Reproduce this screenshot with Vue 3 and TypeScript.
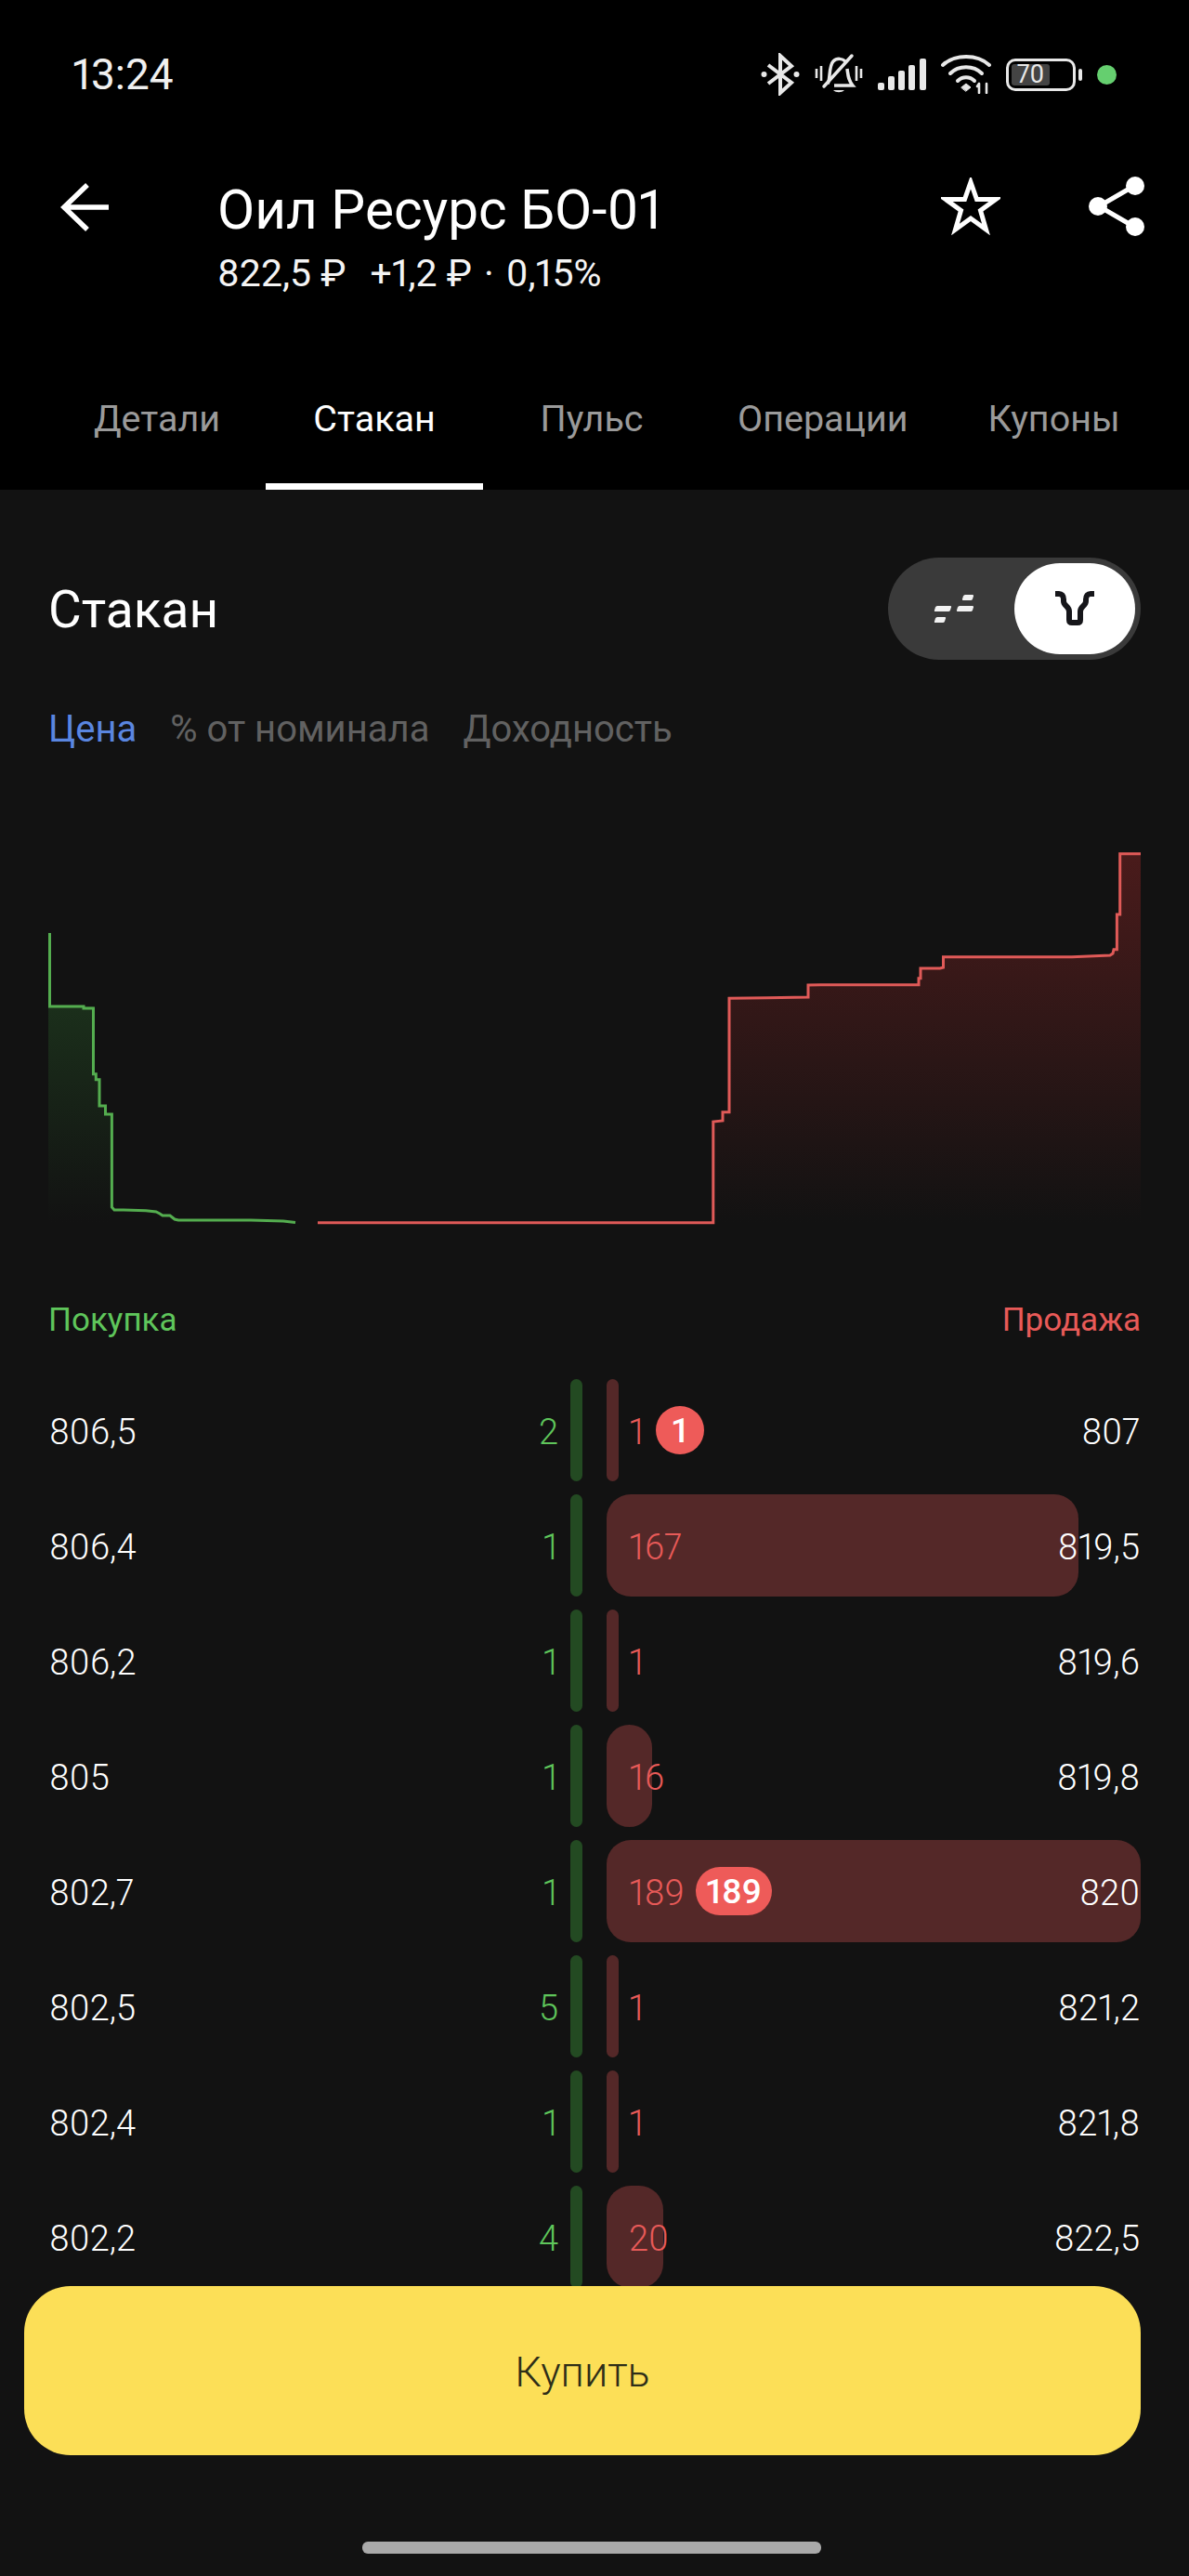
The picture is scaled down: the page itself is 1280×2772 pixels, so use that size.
<script setup lang="ts">
// Стакан заявок: шапка, график глубины и таблица покупка/продажа
interface Row {
  bid: string
  bidQty: number
  askQty: number
  ask: string
  width: number
  badge?: string
}

const tabs = ['Детали', 'Стакан', 'Пульс', 'Операции', 'Купоны']

const rows: Row[] = [
  { bid: '806,5', bidQty: 2, askQty: 1, ask: '807', width: 13, badge: '1' },
  { bid: '806,4', bidQty: 1, askQty: 167, ask: '819,5', width: 508 },
  { bid: '806,2', bidQty: 1, askQty: 1, ask: '819,6', width: 13 },
  { bid: '805', bidQty: 1, askQty: 16, ask: '819,8', width: 49 },
  { bid: '802,7', bidQty: 1, askQty: 189, ask: '820', width: 575, badge: '189' },
  { bid: '802,5', bidQty: 5, askQty: 1, ask: '821,2', width: 13 },
  { bid: '802,4', bidQty: 1, askQty: 1, ask: '821,8', width: 13 },
  { bid: '802,2', bidQty: 4, askQty: 20, ask: '822,5', width: 61 },
]

const greenLine =
  'M53.5 1004V1083H90V1085H100.5V1155.7H103.3V1161.7H107V1190H113.5V1199H120.4V1299L123 1302H133L157 1302.7L168 1304L172 1306L175 1308H183L188 1312L192 1313H270L305 1314L318 1315.5'
const greenFill = 'M52 1083H100.5V1155.7H103.3V1161.7H107V1190H113.5V1199H120.4V1316H52Z'
const redLine =
  'M342 1315.7H767.8V1207L778 1206V1196.7H785V1074.3L825.7 1073.7L870 1073V1060L883.7 1059.7H989V1052.7H991V1042H1012L1015.5 1041V1029.7H1154L1195 1028L1198 1026L1199 1021.7H1202.4V984H1205.7V918.7H1228'
const redFill =
  'M767.8 1316V1207L778 1206V1196.7H785V1074.3L825.7 1073.7L870 1073V1060L883.7 1059.7H989V1052.7H991V1042H1012L1015.5 1041V1029.7H1154L1195 1028L1198 1026L1199 1021.7H1202.4V984H1205.7V918.7H1228V1316Z'
</script>

<template>
  <div class="screen">
    <header class="top">
      <div class="status">
        <span class="time">13:24</span>
        <div class="status-icons">
          <svg width="42" height="46" viewBox="0 0 42 46" fill="none" stroke="#e8e8e8" stroke-width="4">
            <path d="M8 13L33 32L21 43V3L33 14L8 33" />
            <circle cx="3.500" cy="23" r="3" fill="#e8e8e8" stroke="none" />
            <circle cx="38.500" cy="23" r="3" fill="#e8e8e8" stroke="none" />
          </svg>
          <svg width="52" height="46" viewBox="0 0 52 46" fill="none" stroke="#e8e8e8" stroke-width="3.5">
            <path d="M2 17V27M7 14V30M45 14V30M50 17V27" stroke-width="2.600" />
            <path d="M14 33C17 29 15 14 20 9C24 5 30 6 33 9M35 17C36 24 36 29 41 35H21" />
            <path d="M40 3L10 36" stroke-linecap="round" />
            <path d="M20 40C23 43 29 43 32 40Z" fill="#e8e8e8" stroke="none" />
          </svg>
          <svg width="52" height="34" viewBox="0 0 52 34" fill="#e8e8e8">
            <rect x="0" y="26" width="7" height="8" rx="2" />
            <rect x="11" y="19" width="7" height="15" rx="2" />
            <rect x="22" y="13" width="7" height="21" rx="2" />
            <rect x="33" y="7" width="7" height="27" rx="2" />
            <rect x="45" y="0" width="7" height="34" rx="2" />
          </svg>
          <svg width="54" height="42" viewBox="0 0 54 42" fill="none" stroke="#e8e8e8" stroke-width="4" stroke-linecap="round">
            <path d="M2 11C15 -1 39 -1 52 11" />
            <path d="M10 20C19 11 35 11 44 20" />
            <path d="M18 28C23 23 31 23 36 28" />
            <path d="M22 35L27 31L32 35L27 39Z" fill="#e8e8e8" stroke-width="1" />
            <path d="M41 41V31M39 34L41 31M49 41V31" stroke-width="2.600" />
          </svg>
          <div class="battery">
            <div class="battery-body"><span class="battery-level">70</span></div>
            <div class="battery-cap"></div>
          </div>
          <span class="green-dot"></span>
        </div>
      </div>

      <div class="title-bar">
        <svg class="back" width="52" height="52" viewBox="0 0 52 52" fill="none" stroke="#fff" stroke-width="5.500">
          <path d="M29 2L4 26L29 50M4 26H52" />
        </svg>
        <div class="title-text">
          <h1>Оил Ресурс БО-01</h1>
          <p><span>822,5 ₽</span><span class="change">+1,2 ₽</span><span class="sep">·</span><span>0,15%</span></p>
        </div>
        <svg class="star" width="64" height="62" viewBox="0 0 64 62" fill="none" stroke="#fff" stroke-width="5">
          <path d="M32 5L38.500 23.500H59L42.500 35.500L48.500 56L32 44L15.500 56L21.500 35.500L5 23.500H25.500Z" />
        </svg>
        <svg class="share" width="60" height="66" viewBox="0 0 60 66" fill="#fff" stroke="#fff">
          <path d="M49 11L11 33L49 55" fill="none" stroke-width="5" />
          <circle cx="50" cy="11" r="10" stroke="none" />
          <circle cx="10" cy="33" r="10" stroke="none" />
          <circle cx="50" cy="55" r="10" stroke="none" />
        </svg>
      </div>

      <nav class="tabs">
        <div v-for="tab in tabs" :key="tab" class="tab" :class="{ active: tab === 'Стакан' }">{{ tab }}</div>
      </nav>
    </header>

    <main class="content">
      <div class="book-head">
        <h2>Стакан</h2>
        <div class="switch">
          <svg width="46" height="34" viewBox="0 0 46 34" fill="#f2f2f2">
            <path d="M5 14H19Q20.500 14 20 15.500L19 18.500Q18.500 20 17 20H3Q1.500 20 2 18.500L3 15.500Q3.500 14 5 14Z" />
            <path d="M5 26H13Q14.500 26 14 27.500L13 30.500Q12.500 32 11 32H3Q1.500 32 2 30.500L3 27.500Q3.500 26 5 26Z" />
            <path d="M35 2H43Q44.500 2 44 3.500L43 6.500Q42.500 8 41 8H33Q31.500 8 32 6.500L33 3.500Q33.500 2 35 2Z" />
            <path d="M29 14H43Q44.500 14 44 15.500L43 18.500Q42.500 20 41 20H27Q25.500 20 26 18.500L27 15.500Q27.500 14 29 14Z" />
          </svg>
          <div class="switch-on">
            <svg width="44" height="38" viewBox="0 0 44 38" fill="none" stroke="#16161a" stroke-width="6">
              <path d="M1 3H5C8 3 10 5 10 9V11C10 16 16 16 16 22V31Q16 34 19 34H25Q28 34 28 31V22C28 16 34 16 34 11V9C34 5 36 3 39 3H43" />
            </svg>
          </div>
        </div>
      </div>

      <div class="modes">
        <span class="mode active">Цена</span>
        <span class="mode">% от номинала</span>
        <span class="mode">Доходность</span>
      </div>

      <svg class="chart" width="1280" height="440" viewBox="0 900 1280 440" fill="none">
        <defs>
          <linearGradient id="red-fade" x1="0" y1="919" x2="0" y2="1316" gradientUnits="userSpaceOnUse">
            <stop offset="0" stop-color="#4a1b1b" />
            <stop offset="1" stop-color="#4a1b1b" stop-opacity="0" />
          </linearGradient>
          <linearGradient id="green-fade" x1="0" y1="1083" x2="0" y2="1316" gradientUnits="userSpaceOnUse">
            <stop offset="0" stop-color="#1b2f1b" />
            <stop offset="1" stop-color="#1b2f1b" stop-opacity="0" />
          </linearGradient>
        </defs>
        <path :d="greenFill" fill="url(#green-fade)" />
        <path :d="redFill" fill="url(#red-fade)" />
        <path :d="greenLine" stroke="#54ad4f" stroke-width="3" />
        <path :d="redLine" stroke="#e05a58" stroke-width="3" />
      </svg>

      <div class="sides">
        <span class="buy">Покупка</span>
        <span class="sell">Продажа</span>
      </div>

      <div class="book">
        <div v-for="row in rows" :key="row.bid" class="row">
          <span class="bid">{{ row.bid }}</span>
          <span class="bid-qty">{{ row.bidQty }}</span>
          <span class="bid-bar"></span>
          <div class="ask-cell">
            <span class="ask-bar" :style="{ width: row.width + 'px' }"></span>
            <span class="ask-qty">{{ row.askQty }}</span>
            <span v-if="row.badge" class="badge">{{ row.badge }}</span>
            <span class="ask">{{ row.ask }}</span>
          </div>
        </div>
      </div>
    </main>

    <footer class="bottom">
      <button class="buy-btn">Купить</button>
      <div class="home-bar"></div>
    </footer>
  </div>
</template>

<style>
html,
body {
  margin: 0;
  background: #121212;
}
</style>

<style scoped>
.screen {
  width: 1280px;
  height: 2772px;
  overflow: hidden;
  background: #121212;
  color: #fff;
  font-family: Roboto, "Noto Sans", sans-serif;
  font-variant-numeric: proportional-nums;
}
.top {
  height: 527px;
  background: #000;
}
.status {
  height: 160px;
  display: flex;
  align-items: center;
  justify-content: space-between;
  padding: 0 78px 0 78px;
}
.time {
  font-size: 46px;
  color: #f0f0f0;
}
.status-icons {
  display: flex;
  align-items: center;
  gap: 16px;
}
.battery {
  display: flex;
  align-items: center;
  gap: 3px;
}
.battery-body {
  width: 75px;
  height: 35px;
  box-sizing: border-box;
  border: 3px solid #e8e8e8;
  border-radius: 10px;
  padding: 3px;
}
.battery-level {
  display: block;
  width: 41px;
  height: 100%;
  background: #444;
  border-radius: 3px;
  color: #e8e8e8;
  font-size: 27px;
  line-height: 23px;
  text-align: center;
}
.battery-cap {
  width: 4px;
  height: 13px;
  background: #e8e8e8;
  border-radius: 2px;
}
.green-dot {
  width: 21px;
  height: 21px;
  border-radius: 50%;
  background: #65cf6f;
}
.title-bar {
  height: 150px;
  display: flex;
  align-items: flex-start;
  padding: 0 48px 0 65px;
}
.back {
  margin-top: 37px;
}
.title-text {
  flex: 1;
  margin-left: 117px;
}
.title-text h1 {
  margin: 33px 0 0;
  font-size: 58.5px;
  font-weight: 400;
  line-height: 66px;
}
.title-text p {
  margin: 12px 0 0;
  font-size: 41px;
  line-height: 46px;
  display: flex;
  color: #f4f4f4;
}
.change {
  margin-left: 26px;
}
.sep {
  margin: 0 13px;
}
.star {
  margin-top: 31px;
}
.share {
  margin: 29px 0 0 95px;
}
.tabs {
  height: 217px;
  display: flex;
  align-items: flex-end;
  padding-left: 52px;
}
.tab {
  height: 156px;
  box-sizing: border-box;
  min-width: 234px;
  padding: 9px 40px 0;
  border-bottom: 7px solid transparent;
  display: flex;
  align-items: center;
  justify-content: center;
  color: #9a9a9a;
  font-size: 39.5px;
}
.tab.active {
  color: #fff;
  border-bottom-color: #fff;
}
.content {
  height: 1933px;
  overflow: hidden;
  box-sizing: border-box;
  padding-top: 73px;
}
.book-head {
  height: 110px;
  display: flex;
  align-items: center;
  justify-content: space-between;
  padding: 0 52px 0 52px;
}
.book-head h2 {
  margin: 2px 0 0;
  font-size: 55px;
  font-weight: 400;
}
.switch {
  width: 272px;
  height: 110px;
  box-sizing: border-box;
  border-radius: 55px;
  background: #3a3a3a;
  display: flex;
  align-items: center;
  justify-content: space-between;
  padding: 0 6px 0 48px;
}
.switch-on {
  width: 130px;
  height: 98px;
  border-radius: 49px;
  background: #fff;
  display: flex;
  align-items: center;
  justify-content: center;
}
.modes {
  display: flex;
  gap: 36px;
  padding: 52px 52px 0;
  font-size: 40px;
  line-height: 46px;
  color: #616161;
}
.mode.active {
  color: #5a86e0;
}
.chart {
  display: block;
  margin-top: 92px;
}
.sides {
  display: flex;
  justify-content: space-between;
  padding: 0 52px 0 52px;
  margin-top: 60px;
  font-size: 35px;
  line-height: 42px;
}
.buy {
  color: #5fc65b;
}
.sell {
  color: #e85a58;
}
.book {
  padding: 42px 52px 0 53px;
  display: flex;
  flex-direction: column;
  gap: 14px;
}
.row {
  height: 110px;
  flex: none;
  display: flex;
  align-items: center;
  font-size: 38px;
  font-weight: 300;
}
.bid {
  width: 300px;
  padding-top: 3px;
}
.bid-qty {
  width: 248px;
  padding-top: 3px;
  text-align: right;
  color: #5fc65b;
}
.bid-bar {
  width: 13px;
  height: 110px;
  margin-left: 13px;
  border-radius: 7px;
  background: #234a22;
}
.ask-cell {
  position: relative;
  flex: 1;
  margin-left: 26px;
  height: 110px;
  display: flex;
  align-items: center;
  padding-left: 24px;
}
.ask-bar {
  position: absolute;
  left: 0;
  top: 0;
  height: 110px;
  border-radius: 26px;
  background: #542828;
}
.ask-qty {
  position: relative;
  padding-top: 3px;
  color: #e85a58;
}
.badge {
  position: relative;
  margin-left: 12px;
  min-width: 52px;
  height: 52px;
  box-sizing: border-box;
  padding: 1px 11px 0;
  border-radius: 26px;
  background: #ee5b59;
  color: #fff;
  font-weight: 500;
  font-size: 37px;
  line-height: 52px;
  text-align: center;
}
.ask {
  position: relative;
  padding-top: 3px;
  margin-left: auto;
  margin-right: 1px;
}
.bottom {
  height: 312px;
  padding: 0 52px 0 26px;
  box-sizing: border-box;
}
.buy-btn {
  display: block;
  width: 1202px;
  height: 182px;
  border: 0;
  border-radius: 50px;
  background: #fcdf57;
  color: #2e2e18;
  font-family: inherit;
  font-size: 45px;
  font-weight: 300;
  padding: 3px 0 0;
}
.home-bar {
  width: 494px;
  height: 13px;
  margin: 93px 0 0 364px;
  border-radius: 6px;
  background: #aaa;
}
</style>
